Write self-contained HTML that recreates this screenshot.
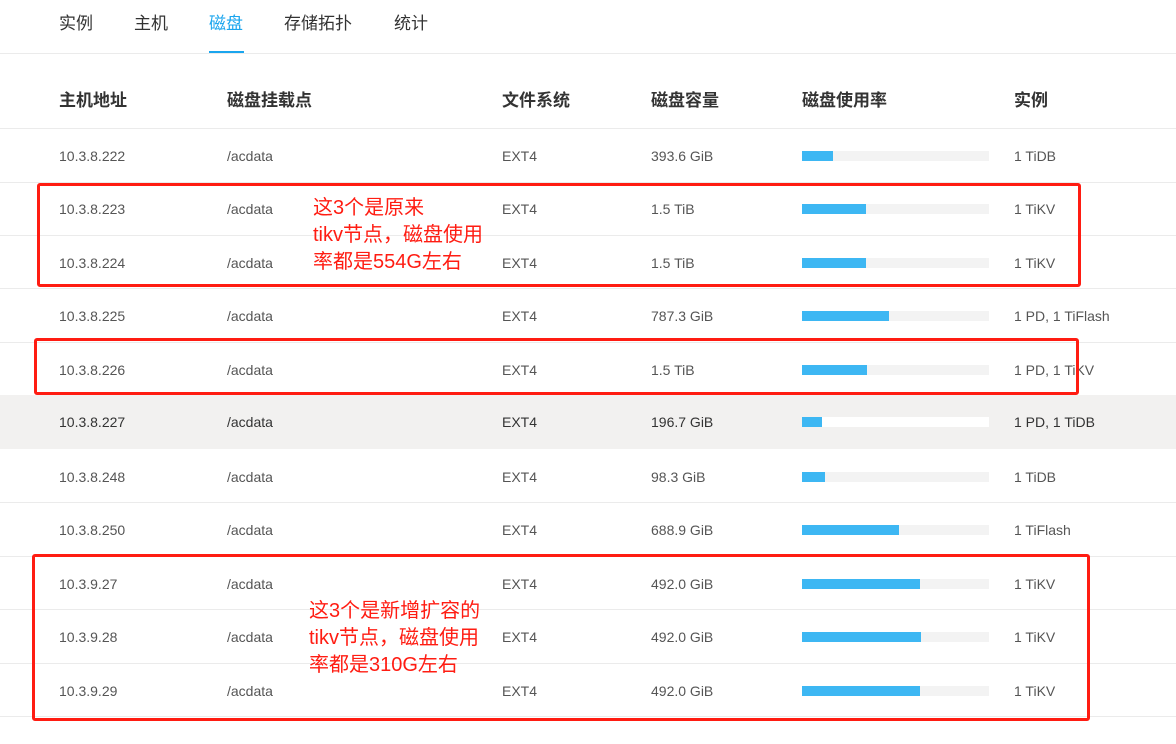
<!DOCTYPE html>
<html><head><meta charset="utf-8"><style>
*{margin:0;padding:0;box-sizing:border-box}
body{width:1176px;height:744px;background:#fff;position:relative;overflow:hidden;font-family:"Liberation Sans","Noto Sans CJK SC",sans-serif;color:#555}
.a{position:absolute;white-space:nowrap}
.tab{top:13px;font-size:17px;color:#333;line-height:22px}
.hd{top:90px;font-size:17px;font-weight:bold;color:#333;line-height:22px}
.line{position:absolute;left:0;width:1176px;height:1px;background:#ebebeb}
.row{position:absolute;left:0;width:1176px;height:53px}
.c{position:absolute;font-size:14px;line-height:18px;top:18px;color:#555}
.bar{position:absolute;left:802px;top:22px;width:187px;height:10px;background:#f3f3f3}
.bar i{display:block;height:10px;background:#3db7f3}
.box{position:absolute;border:3px solid #ff1c12;border-radius:3px}
.note{position:absolute;color:#ff1c12;font-size:20px;line-height:27px;white-space:nowrap}
</style></head><body>
<div class="a tab" style="left:59px">实例</div>
<div class="a tab" style="left:134px">主机</div>
<div class="a tab" style="left:209px;color:#1aa5ee">磁盘</div>
<div class="a tab" style="left:284px">存储拓扑</div>
<div class="a tab" style="left:394px">统计</div>
<div class="line" style="top:53px"></div>
<div class="a" style="left:209px;top:51px;width:35px;height:2px;background:#1aa5ee"></div>
<div class="a hd" style="left:59px">主机地址</div>
<div class="a hd" style="left:227px">磁盘挂载点</div>
<div class="a hd" style="left:502px">文件系统</div>
<div class="a hd" style="left:651px">磁盘容量</div>
<div class="a hd" style="left:802px">磁盘使用率</div>
<div class="a hd" style="left:1014px">实例</div>
<div class="line" style="top:128px"></div>

<div class="row" style="top:129px"><div class="c" style="left:59px">10.3.8.222</div><div class="c" style="left:227px">/acdata</div><div class="c" style="left:502px">EXT4</div><div class="c" style="left:651px">393.6 GiB</div><div class="bar"><i style="width:31px"></i></div><div class="c" style="left:1014px">1 TiDB</div></div>
<div class="line" style="top:182px"></div>
<div class="row" style="top:182px"><div class="c" style="left:59px">10.3.8.223</div><div class="c" style="left:227px">/acdata</div><div class="c" style="left:502px">EXT4</div><div class="c" style="left:651px">1.5 TiB</div><div class="bar"><i style="width:64px"></i></div><div class="c" style="left:1014px">1 TiKV</div></div>
<div class="line" style="top:235px"></div>
<div class="row" style="top:236px"><div class="c" style="left:59px">10.3.8.224</div><div class="c" style="left:227px">/acdata</div><div class="c" style="left:502px">EXT4</div><div class="c" style="left:651px">1.5 TiB</div><div class="bar"><i style="width:64px"></i></div><div class="c" style="left:1014px">1 TiKV</div></div>
<div class="line" style="top:288px"></div>
<div class="row" style="top:289px"><div class="c" style="left:59px">10.3.8.225</div><div class="c" style="left:227px">/acdata</div><div class="c" style="left:502px">EXT4</div><div class="c" style="left:651px">787.3 GiB</div><div class="bar"><i style="width:87px"></i></div><div class="c" style="left:1014px">1 PD, 1 TiFlash</div></div>
<div class="line" style="top:342px"></div>
<div class="row" style="top:343px"><div class="c" style="left:59px">10.3.8.226</div><div class="c" style="left:227px">/acdata</div><div class="c" style="left:502px">EXT4</div><div class="c" style="left:651px">1.5 TiB</div><div class="bar"><i style="width:65px"></i></div><div class="c" style="left:1014px">1 PD, 1 TiKV</div></div>
<div class="row" style="top:395px;height:54px;background:#f2f1f0"><div class="c" style="left:59px;color:#333">10.3.8.227</div><div class="c" style="left:227px;color:#333">/acdata</div><div class="c" style="left:502px;color:#333">EXT4</div><div class="c" style="left:651px;color:#333">196.7 GiB</div><div class="bar" style="background:#fff"><i style="width:20px"></i></div><div class="c" style="left:1014px;color:#333">1 PD, 1 TiDB</div></div>
<div class="row" style="top:450px"><div class="c" style="left:59px">10.3.8.248</div><div class="c" style="left:227px">/acdata</div><div class="c" style="left:502px">EXT4</div><div class="c" style="left:651px">98.3 GiB</div><div class="bar"><i style="width:23px"></i></div><div class="c" style="left:1014px">1 TiDB</div></div>
<div class="line" style="top:502px"></div>
<div class="row" style="top:503px"><div class="c" style="left:59px">10.3.8.250</div><div class="c" style="left:227px">/acdata</div><div class="c" style="left:502px">EXT4</div><div class="c" style="left:651px">688.9 GiB</div><div class="bar"><i style="width:97px"></i></div><div class="c" style="left:1014px">1 TiFlash</div></div>
<div class="line" style="top:556px"></div>
<div class="row" style="top:557px"><div class="c" style="left:59px">10.3.9.27</div><div class="c" style="left:227px">/acdata</div><div class="c" style="left:502px">EXT4</div><div class="c" style="left:651px">492.0 GiB</div><div class="bar"><i style="width:118px"></i></div><div class="c" style="left:1014px">1 TiKV</div></div>
<div class="line" style="top:609px"></div>
<div class="row" style="top:610px"><div class="c" style="left:59px">10.3.9.28</div><div class="c" style="left:227px">/acdata</div><div class="c" style="left:502px">EXT4</div><div class="c" style="left:651px">492.0 GiB</div><div class="bar"><i style="width:119px"></i></div><div class="c" style="left:1014px">1 TiKV</div></div>
<div class="line" style="top:663px"></div>
<div class="row" style="top:664px"><div class="c" style="left:59px">10.3.9.29</div><div class="c" style="left:227px">/acdata</div><div class="c" style="left:502px">EXT4</div><div class="c" style="left:651px">492.0 GiB</div><div class="bar"><i style="width:118px"></i></div><div class="c" style="left:1014px">1 TiKV</div></div>
<div class="line" style="top:716px"></div>

<div class="box" style="left:37px;top:183px;width:1044px;height:104px"></div>
<div class="box" style="left:34px;top:338px;width:1045px;height:57px"></div>
<div class="box" style="left:32px;top:554px;width:1058px;height:167px"></div>
<div class="note" style="left:313px;top:195px">这3个是原来<br>tikv节点，磁盘使用<br>率都是554G左右</div>
<div class="note" style="left:309px;top:598px">这3个是新增扩容的<br>tikv节点，磁盘使用<br>率都是310G左右</div>
</body></html>
